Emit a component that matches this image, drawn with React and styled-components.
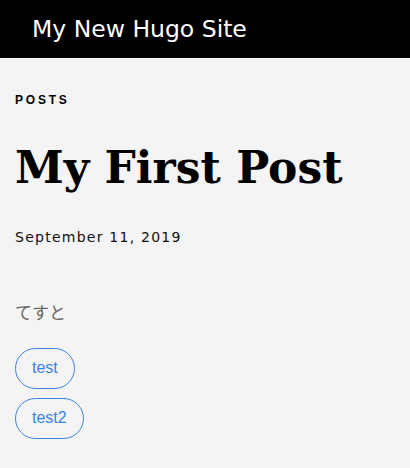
import React from 'react';
import styled, { createGlobalStyle } from 'styled-components';

const GlobalStyle = createGlobalStyle`
  html, body {
    margin: 0;
    padding: 0;
    background: #f4f4f4;
  }
`;

const App = () =>
  <>
    <GlobalStyle />
    <Header>
      <SiteTitle>My New Hugo Site</SiteTitle>
    </Header>
    <Main>
      <Section>Posts</Section>
      <PostTitle>My First Post</PostTitle>
      <PostDate>September 11, 2019</PostDate>
      <Content>てすと</Content>
      <Tags>
        <Tag>test</Tag>
        <Tag>test2</Tag>
      </Tags>
    </Main>
  </>;

const Header = styled.header`
  display: flex;
  align-items: center;
  height: 58px;
  padding: 0 32px;
  background: #000;
`;

const SiteTitle = styled.a`
  color: #fff;
  font-family: "DejaVu Sans", Verdana, sans-serif;
  font-size: 23.5px;
  text-decoration: none;
`;

const Main = styled.main`
  display: flex;
  flex-direction: column;
  align-items: flex-start;
  padding: 35px 15px;
`;

const Section = styled.div`
  font-family: "Liberation Sans", Arial, sans-serif;
  font-weight: 700;
  font-size: 12px;
  letter-spacing: 2.8px;
  text-transform: uppercase;
  color: #000;
`;

const PostTitle = styled.h1`
  margin: 35px 0 0;
  font-family: "DejaVu Serif", Georgia, serif;
  font-weight: 700;
  font-size: 44px;
  line-height: 1.2;
  color: #000;
`;

const PostDate = styled.div`
  margin-top: 34px;
  font-family: "DejaVu Sans", Verdana, sans-serif;
  font-size: 14px;
  letter-spacing: 1.25px;
  color: #111;
`;

const Content = styled.p`
  margin: 54px 0 0;
  font-family: "Noto Sans CJK JP", sans-serif;
  font-size: 17px;
  color: #666;
`;

const Tags = styled.div`
  display: flex;
  flex-direction: column;
  align-items: flex-start;
  gap: 9px;
  margin-top: 24px;
`;

const Tag = styled.a`
  display: inline-flex;
  align-items: center;
  height: 41px;
  box-sizing: border-box;
  padding: 0 16px;
  border: 1px solid #3b82e0;
  border-radius: 21px;
  color: #3b82e0;
  font-family: "Liberation Sans", Arial, sans-serif;
  font-size: 16px;
`;

export default App;
